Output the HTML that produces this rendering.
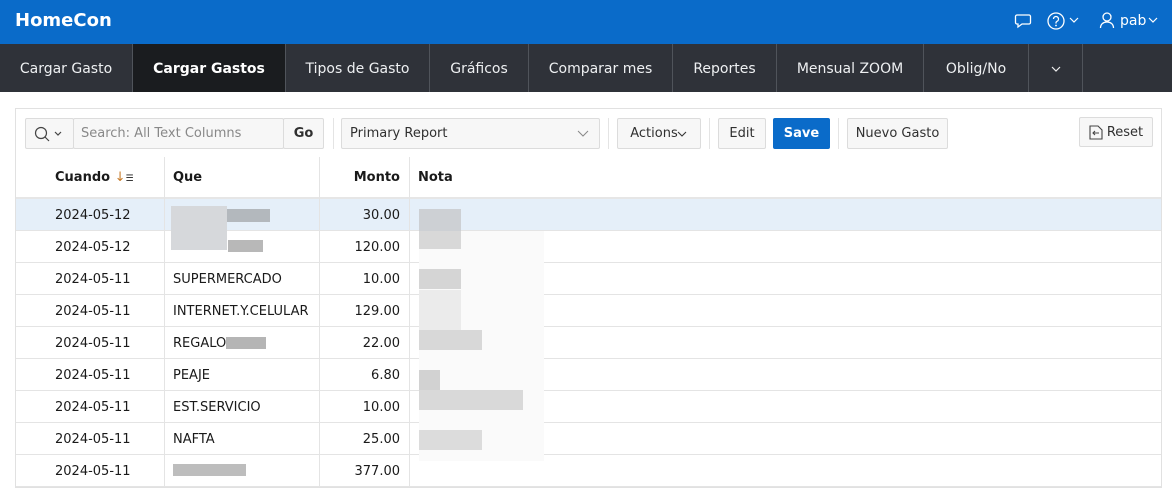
<!DOCTYPE html>
<html><head><meta charset="utf-8"><style>
*{box-sizing:border-box;margin:0;padding:0}
body{width:1172px;height:484px;overflow:hidden;background:#fff;font-family:"DejaVu Sans","Liberation Sans",sans-serif;color:#1a1a1a;position:relative}
.hdr{position:absolute;left:0;top:0;width:1172px;height:44px;background:#0a6bc9;color:#fff}
.logo{position:absolute;left:15px;top:10px;font-size:18px;font-weight:bold}
.nav{position:absolute;left:0;top:44px;width:1172px;height:48px;background:#2f3239;color:#eef0f2;font-size:14px}
.nav div{position:absolute;top:0;height:48px;line-height:50px;text-align:center;border-right:1px solid #50545b}
.nav .act{background:#1a1c1f;font-weight:bold;color:#fff}
.reg{position:absolute;left:15px;top:108px;width:1147px;height:380px;border:1px solid #e1e1e1}
.b{position:absolute;top:118px;height:31px;border:1px solid #dcdcdc;background:#f7f7f7;border-radius:2px;font-size:13px;line-height:30px;color:#303030;text-align:center}
.sep{position:absolute;top:118px;width:1px;height:31px;background:#e4e4e4}
.th{position:absolute;top:157px;height:42px;line-height:42px;font-size:13px;font-weight:bold;border-bottom:2px solid #e6e6e6}
.row{position:absolute;left:16px;width:1145px;height:32px;border-bottom:1px solid #e4e4e4;font-size:13px;line-height:34px}
.row span{position:absolute;top:0}
.vl{position:absolute;top:157px;width:1px;height:330px;background:#e4e4e4}
.blk{position:absolute}
</style></head><body>
<div class="hdr"><div class="logo">HomeCon</div>
<svg style="position:absolute;left:1014px;top:12px" width="18" height="18" viewBox="0 0 18 18"><path d="M3 3h12a1.5 1.5 0 0 1 1.5 1.5v6A1.5 1.5 0 0 1 15 12H8l-4 3v-3H3a1.5 1.5 0 0 1-1.5-1.5v-6A1.5 1.5 0 0 1 3 3z" fill="none" stroke="#fff" stroke-width="1.3"/></svg>
<svg style="position:absolute;left:1046px;top:11px" width="20" height="20" viewBox="0 0 20 20"><circle cx="10" cy="10" r="8" fill="none" stroke="#fff" stroke-width="1.3"/><path d="M7.5 8a2.5 2.5 0 1 1 3.5 2.3c-.7.3-1 .8-1 1.5v.7" fill="none" stroke="#fff" stroke-width="1.3"/><circle cx="10" cy="14.5" r=".9" fill="#fff"/></svg>
<svg style="position:absolute;left:1069px;top:16px" width="10" height="8"><path d="M1 2l4 4 4-4" fill="none" stroke="#fff" stroke-width="1.2"/></svg>
<svg style="position:absolute;left:1099px;top:11px" width="16" height="18" viewBox="0 0 16 18"><circle cx="8" cy="6" r="4" fill="none" stroke="#fff" stroke-width="1.3"/><path d="M1.5 17c0-4 3-6 6.5-6s6.5 2 6.5 6" fill="none" stroke="#fff" stroke-width="1.3"/></svg>
<div style="position:absolute;left:1120px;top:13px;font-size:14px">pab</div>
<svg style="position:absolute;left:1148px;top:16px" width="10" height="8"><path d="M1 2l4 4 4-4" fill="none" stroke="#fff" stroke-width="1.2"/></svg>
</div>
<div class="nav">
<div style="left:0;width:133px">Cargar Gasto</div>
<div class="act" style="left:133px;width:153px">Cargar Gastos</div>
<div style="left:286px;width:144px">Tipos de Gasto</div>
<div style="left:430px;width:99px">Gráficos</div>
<div style="left:529px;width:144px">Comparar mes</div>
<div style="left:673px;width:104px">Reportes</div>
<div style="left:777px;width:147px">Mensual ZOOM</div>
<div style="left:924px;width:105px">Oblig/No</div>
<div style="left:1029px;width:54px"><svg width="12" height="8"><path d="M2 2l4 4 4-4" fill="none" stroke="#eee" stroke-width="1.2"/></svg></div>
</div>
<div class="reg"></div>
<div class="b" style="left:25px;width:49px"><svg style="position:absolute;left:8px;top:7px" width="30" height="16"><circle cx="7" cy="7" r="5.5" fill="none" stroke="#444" stroke-width="1.2"/><path d="M11 11l4 4M21 6l3 3 3-3" fill="none" stroke="#444" stroke-width="1.2"/></svg></div>
<div class="b" style="left:73px;width:211px;text-align:left;padding-left:7px;color:#888">Search: All Text Columns</div>
<div class="b" style="left:283px;width:41px;font-weight:bold">Go</div>
<div class="sep" style="left:333px"></div>
<div class="b" style="left:341px;width:259px;text-align:left;padding-left:8px">Primary Report<svg style="position:absolute;right:10px;top:11px" width="12" height="8"><path d="M1 1l5 5 5-5" fill="none" stroke="#888" stroke-width="1"/></svg></div>
<div class="sep" style="left:608px"></div>
<div class="b" style="left:617px;width:84px;padding-right:10px">Actions<svg style="position:absolute;right:13px;top:12px" width="10" height="7"><path d="M1 1l4 4 4-4" fill="none" stroke="#333" stroke-width="1.1"/></svg></div>
<div class="sep" style="left:709px"></div>
<div class="b" style="left:718px;width:48px">Edit</div>
<div class="b" style="left:773px;width:57px;background:#0a6bc9;border-color:#0a6bc9;color:#fff;font-weight:bold">Save</div>
<div class="sep" style="left:838px"></div>
<div class="b" style="left:847px;width:101px">Nuevo Gasto</div>
<div class="b" style="left:1079px;width:74px;top:117px;height:30px;line-height:29px;padding-left:18px">Reset<svg style="position:absolute;left:9px;top:7px" width="15" height="15" viewBox="0 0 15 15"><path d="M1 1h8l4 4v9H1z" fill="none" stroke="#444" stroke-width="1.1"/><path d="M10 8H4M6 6L4 8l2 2" fill="none" stroke="#444" stroke-width="1.1"/></svg></div>
<div class="th" style="left:16px;width:148px;padding-left:39px">Cuando <span style="color:#c77b2a;font-weight:normal">↓</span><span style="font-size:9px;font-weight:normal">☰</span></div>
<div class="th" style="left:164px;width:155px;padding-left:9px">Que</div>
<div class="th" style="left:319px;width:90px;text-align:right;padding-right:9px">Monto</div>
<div class="th" style="left:409px;width:752px;padding-left:9px">Nota</div>
<div class="row" style="top:199px;background:#e5eff9"><span style="left:39px">2024-05-12</span><span style="right:761px">30.00</span></div>
<div class="row" style="top:231px"><span style="left:39px">2024-05-12</span><span style="right:761px">120.00</span></div>
<div class="row" style="top:263px"><span style="left:39px">2024-05-11</span><span style="left:157px">SUPERMERCADO</span><span style="right:761px">10.00</span></div>
<div class="row" style="top:295px"><span style="left:39px">2024-05-11</span><span style="left:157px">INTERNET.Y.CELULAR</span><span style="right:761px">129.00</span></div>
<div class="row" style="top:327px"><span style="left:39px">2024-05-11</span><span style="left:157px">REGALO.A</span><span style="right:761px">22.00</span></div>
<div class="row" style="top:359px"><span style="left:39px">2024-05-11</span><span style="left:157px">PEAJE</span><span style="right:761px">6.80</span></div>
<div class="row" style="top:391px"><span style="left:39px">2024-05-11</span><span style="left:157px">EST.SERVICIO</span><span style="right:761px">10.00</span></div>
<div class="row" style="top:423px"><span style="left:39px">2024-05-11</span><span style="left:157px">NAFTA</span><span style="right:761px">25.00</span></div>
<div class="row" style="top:455px"><span style="left:39px">2024-05-11</span><span style="right:761px">377.00</span></div>
<div class="vl" style="left:164px"></div><div class="vl" style="left:319px"></div><div class="vl" style="left:409px"></div>
<div class="blk" style="left:171px;top:206px;width:56px;height:44px;background:#d6d8db"></div>
<div class="blk" style="left:227px;top:209px;width:43px;height:13px;background:#b3b8bd"></div>
<div class="blk" style="left:228px;top:240px;width:35px;height:12px;background:#b8b8b8"></div>
<div class="blk" style="left:226px;top:337px;width:40px;height:12px;background:#b5b5b5"></div>
<div class="blk" style="left:173px;top:464px;width:73px;height:12px;background:#bdbdbd"></div>
<div class="blk" style="left:419px;top:209px;width:42px;height:40px;background:#cdd0d4"></div>
<div class="blk" style="left:419px;top:231px;width:125px;height:230px;background:#fafafa"></div>
<div class="blk" style="left:419px;top:231px;width:42px;height:18px;background:#d8d8d8"></div>
<div class="blk" style="left:419px;top:269px;width:42px;height:20px;background:#d5d5d5"></div>
<div class="blk" style="left:419px;top:290px;width:42px;height:40px;background:#ebebeb"></div>
<div class="blk" style="left:419px;top:330px;width:63px;height:20px;background:#d8d8d8"></div>
<div class="blk" style="left:419px;top:370px;width:21px;height:20px;background:#d2d2d2"></div>
<div class="blk" style="left:419px;top:390px;width:104px;height:20px;background:#d9d9d9"></div>
<div class="blk" style="left:419px;top:430px;width:63px;height:20px;background:#dcdcdc"></div>
</body></html>
